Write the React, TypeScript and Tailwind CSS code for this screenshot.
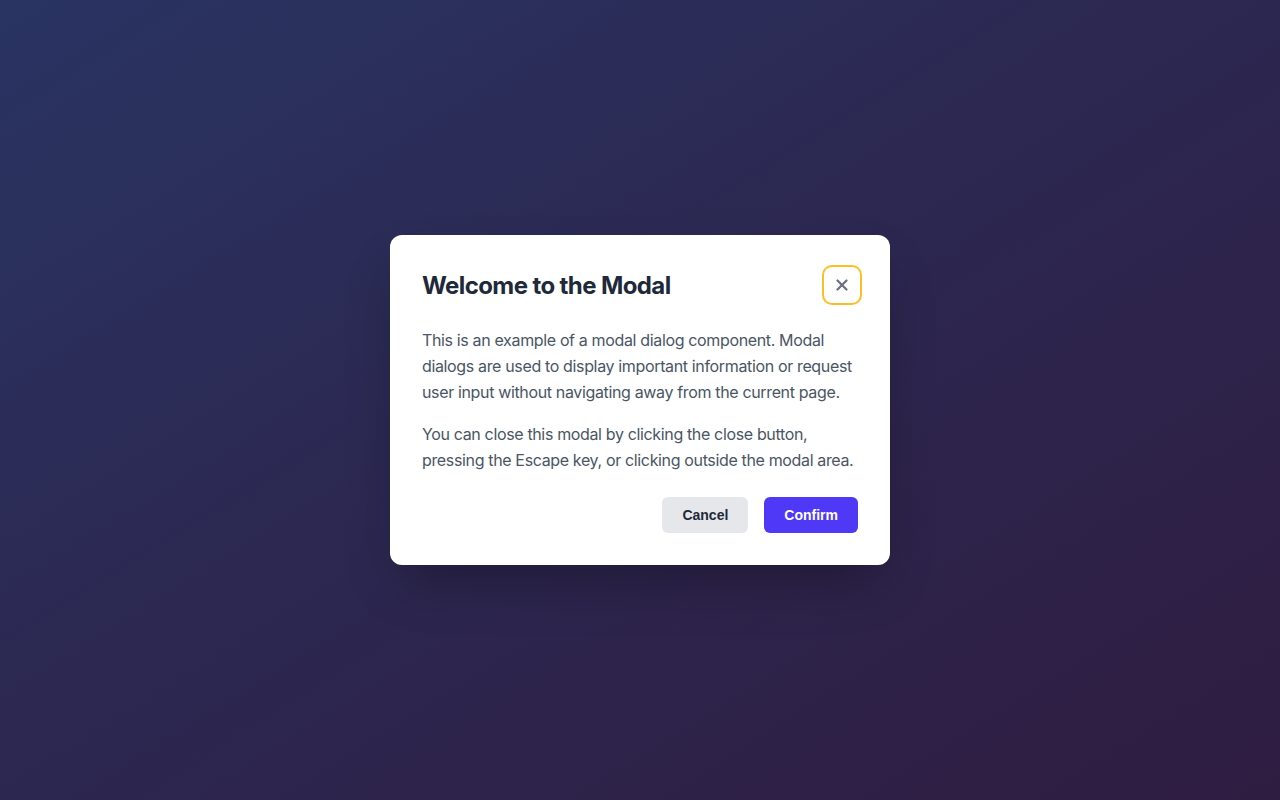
import { X } from 'lucide-react';

export default function App() {
  return (
    <main
      className="h-[800px] w-full bg-gradient-to-br from-[#293462] via-[#2c2750] to-[#2f1c41] flex items-center justify-center"
      style={{ fontFamily: 'Inter, "Noto Sans", sans-serif' }}
    >
      {/* --- MODAL --- */}
      <div className="w-[500px] bg-white rounded-xl p-8 shadow-2xl shadow-black/30">
        <div className="flex items-center justify-between mb-6">
          <h2 className="text-[24px] leading-8 pt-0.5 font-bold text-gray-800 tracking-[-0.025em]">
            Welcome to the Modal
          </h2>
          <button className="w-9 h-9 -mr-0.5 rounded-lg ring-2 ring-[#fbbf24] flex items-center justify-center text-gray-500">
            <X size={18} strokeWidth={3} />
          </button>
        </div>

        <p className="text-base leading-[26px] text-gray-600 tracking-[-0.022em] mb-4">
          This is an example of a modal dialog component. Modal dialogs are used to display important
          information or request user input without navigating away from the current page.
        </p>
        <p className="text-base leading-[26px] text-gray-600 tracking-[-0.022em]">
          You can close this modal by clicking the close button, pressing the Escape key, or clicking
          outside the modal area.
        </p>

        <div
          className="flex justify-end gap-4 mt-6"
          style={{ fontFamily: '"Liberation Sans", Arial, sans-serif' }}
        >
          <button className="px-5 py-2 text-sm leading-5 font-bold rounded-md bg-gray-200 text-gray-800">
            Cancel
          </button>
          <button className="px-5 py-2 text-sm leading-5 font-bold rounded-md bg-indigo-600 text-white">
            Confirm
          </button>
        </div>
      </div>
    </main>
  );
}
